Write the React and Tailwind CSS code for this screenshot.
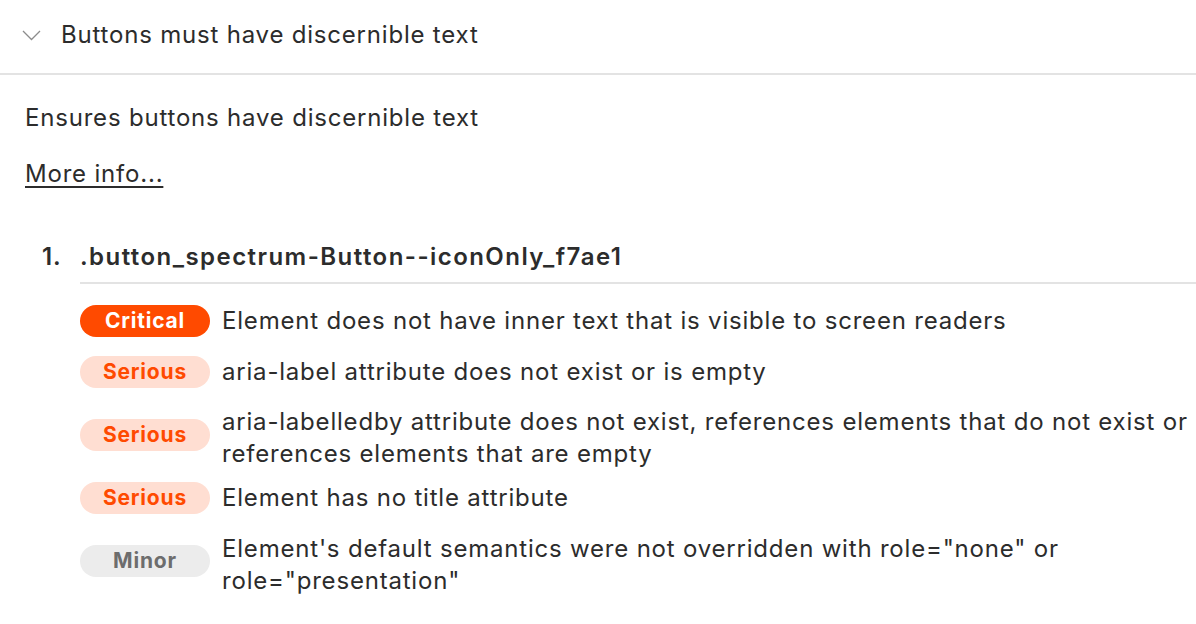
const checks = [
  { level: 'Critical', text: 'Element does not have inner text that is visible to screen readers', gap: 'mt-0', badge: '' },
  { level: 'Serious', text: 'aria-label attribute does not exist or is empty', gap: 'mt-[19px]', badge: '' },
  { level: 'Serious', text: 'aria-labelledby attribute does not exist, references elements that do not exist or references elements that are empty', gap: 'mt-[18px]', badge: 'self-start mt-[13px]' },
  { level: 'Serious', text: 'Element has no title attribute', gap: 'mt-[12px]', badge: '' },
  { level: 'Minor', text: 'Element\'s default semantics were not overridden with role="none" or role="presentation"', gap: 'mt-[19px]', badge: 'self-start mt-[12px]' },
]

const badgeStyles = {
  Critical: 'bg-[#ff4a00] text-white',
  Serious: 'bg-[#ffded2] text-[#ff4a00]',
  Minor: 'bg-[#ececec] text-[#6d6d6d]',
}

export default function App() {
  return (
    <div className="w-[1196px] h-[624px] bg-white text-[#2c2c2c] overflow-hidden font-['Inter','Noto_Sans',sans-serif] text-[24px] leading-[32px] tracking-[0.8px]">
      {/* Rule header */}
      <div className="h-[75px] flex items-center pl-[22px] border-b-2 border-[#e3e3e3]">
        <svg width="19" height="11" viewBox="0 0 19 11" fill="none" className="mt-[-2px]">
          <path d="M1 1l8.5 8.5L18 1" stroke="#8c8c8c" strokeWidth="1.3" />
        </svg>
        <span className="ml-[20px] mt-[-3px]">Buttons must have discernible text</span>
      </div>

      <div className="pl-[25px]">
        <p className="mt-[27px]">Ensures buttons have discernible text</p>
        <a href="#" className="block mt-[24px] underline underline-offset-[4px] decoration-[1.5px] w-fit">More info...</a>

        <ol className="mt-[51px]">
          <li>
            <div className="flex items-center font-semibold">
              <span className="w-[55px] pl-[17px]">1.</span>
              <span className="tracking-[1.45px]">.button_spectrum-Button--iconOnly_f7ae1</span>
            </div>
            <div className="ml-[55px] mt-[9px] border-t-2 border-[#e3e3e3]" />
            <div className="ml-[55px] mt-[21px] flex flex-col">
              {checks.map((c, i) => (
                <div key={i} className={`flex items-center gap-[12px] ${c.gap}`}>
                  <span className={`w-[130px] h-[32px] shrink-0 rounded-full flex items-center justify-center text-[21px] font-bold tracking-[0.8px] ${badgeStyles[c.level]} ${c.badge}`}>
                    {c.level}
                  </span>
                  <span className="pr-[4px]">{c.text}</span>
                </div>
              ))}
            </div>
          </li>
        </ol>
      </div>
    </div>
  )
}
